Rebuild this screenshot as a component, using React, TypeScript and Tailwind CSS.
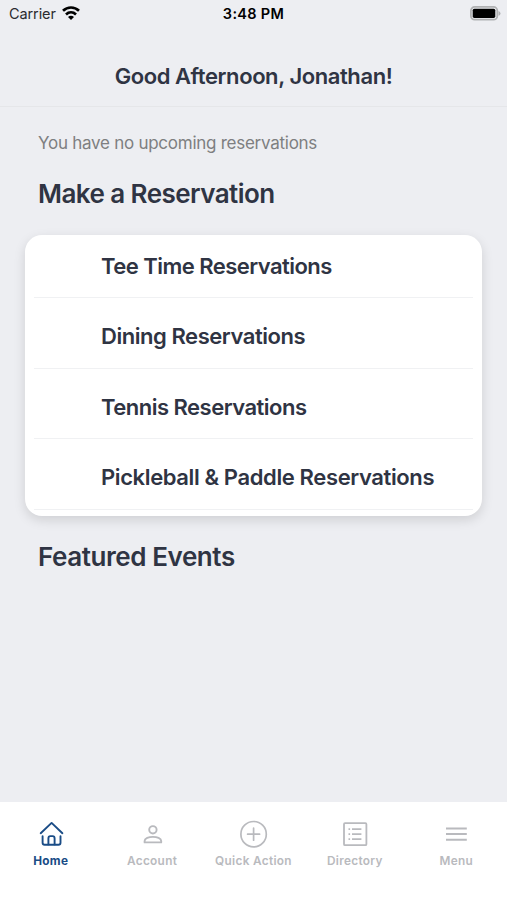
import { useState } from "react";
import type { ReactNode } from "react";

interface Tab {
  id: string;
  label: string;
  icon: ReactNode;
}

const RESERVATIONS = [
  { label: "Tee Time Reservations",            className: "h-[63px] tracking-[-0.54px]" },
  { label: "Dining Reservations",              className: "h-[71px] pt-1.5 tracking-[-0.45px]" },
  { label: "Tennis Reservations",              className: "h-[70px] pt-1.5 tracking-[-0.51px]" },
  { label: "Pickleball & Paddle Reservations", className: "h-[71px] pt-1.5 tracking-[-0.38px]" },
];

const TABS: Tab[] = [
  {
    id: "home",
    label: "Home",
    icon: (
      <>
        <path d="M4.7 14.2 15.6 3.9 26.4 14.2" />
        <path d="M6.6 17.3v6.4q0 2.1 2 2.1h13.9q2 0 2-2.1v-6.4" />
        <path d="M12.4 25.4v-6q0-2.3 2-2.3h2.2q2 0 2 2.3v6" />
      </>
    ),
  },
  {
    id: "account",
    label: "Account",
    icon: (
      <>
        <circle cx="15.9" cy="10.8" r="3.7" />
        <path d="M7.6 23.4v-1.5c0-2.6 4.2-4 8.3-4s8.3 1.4 8.3 4v1.5z" />
      </>
    ),
  },
  {
    id: "quick",
    label: "Quick Action",
    icon: (
      <>
        <circle cx="15.6" cy="15.2" r="12.7" strokeWidth="1.7" />
        <path d="M15.6 9.2v12M9.6 15.2h12" strokeWidth="1.7" />
      </>
    ),
  },
  {
    id: "directory",
    label: "Directory",
    icon: (
      <>
        <rect x="4" y="4.2" width="22.4" height="22" rx="1" strokeWidth="1.8" />
        <path d="M12 10.2H21.4M12 15.2H21.4M12 20.2H21.4M8.5 10.2h1.6M8.5 15.2h1.6M8.5 20.2h1.6" strokeLinecap="butt" strokeWidth="1.7" />
      </>
    ),
  },
  {
    id: "menu",
    label: "Menu",
    icon: <path d="M5 9.5h20.8M5 15h20.8M5 20.8h20.8" strokeLinecap="butt" strokeWidth="2.1" />,
  },
];

function StatusBar() {
  return (
    <div className="grid h-7 grid-cols-3 items-center pl-[9px] pr-[6px] text-black">
      <div className="flex items-center gap-1.5">
        <span className="text-[14.5px] leading-7 tracking-[-0.1px] text-[#2a2b2f]">Carrier</span>
        <svg className="-mt-0.5" width="18" height="14" viewBox="0 0 18 14" fill="none" stroke="currentColor" strokeWidth="2.7">
          <path d="M1 4.8C5.6.4 12.4.4 17 4.8" />
          <path d="M4 8.4c2.9-2.7 7.1-2.7 10 0" />
          <path d="M9 14 6 11c1.7-1.7 4.3-1.7 6 0z" fill="currentColor" stroke="none" />
        </svg>
      </div>
      <span className="-ml-[3px] text-center text-[14.5px] font-semibold leading-7 tracking-[0.3px]">3:48 PM</span>
      <svg className="-mt-0.5 justify-self-end" width="31" height="15" viewBox="0 0 31 15">
        <rect x=".9" y=".9" width="26.4" height="12.8" rx="3.8" fill="none" stroke="#b0b1b3" strokeWidth="1.8" />
        <rect x="2.7" y="2.7" width="22.6" height="9.2" rx="1.6" fill="#000" />
        <path d="M28.5 5v4.8q2-.7 2-2.4t-2-2.4z" fill="#b0b1b3" />
      </svg>
    </div>
  );
}

export default function App() {
  const [active, setActive] = useState("home");

  return (
    <div className="flex h-[900px] w-full flex-col bg-[#edeef2] font-['Inter',sans-serif] text-[#2f3443]">
      <StatusBar />

      {/* Greeting */}
      <header className="flex h-[79px] items-center justify-center border-b border-[#e5e6e9] pt-[17px]">
        <h1 className="text-[22px] font-[560] leading-7 tracking-[-0.42px]">Good Afternoon, Jonathan!</h1>
      </header>

      <main className="flex-1">
        <p className="pl-[38px] pt-6 text-[17px] leading-6 tracking-[-0.26px] text-[#7e7f81]">You have no upcoming reservations</p>
        <h2 className="pl-[38px] pt-[21px] text-[26px] font-[560] leading-9 tracking-[-0.56px]">Make a Reservation</h2>

        <div className="mx-[25px] mt-[23px] h-[281px] rounded-[17px] bg-white px-[9px] shadow-[0_4px_12px_rgba(0,0,0,0.13)]">
          {RESERVATIONS.map(({ label, className }) => (
            <button
              key={label}
              className={`flex w-full items-center border-b border-[#f0f1f3] pl-[67px] text-[22px] font-[560] leading-7 ${className}`}
            >
              {label}
            </button>
          ))}
        </div>

        <h2 className="pl-[38px] pt-[23px] text-[26px] font-[560] leading-9 tracking-[-0.42px]">Featured Events</h2>
      </main>

      {/* Tab bar */}
      <nav className="grid h-[98px] grid-cols-5 bg-white">
        {TABS.map(({ id, label, icon }) => (
          <button
            key={id}
            onClick={() => setActive(id)}
            className={`flex flex-col items-center pt-[17px] ${active === id ? "text-[#1a4c86]" : "text-[#b9babe]"}`}
          >
            <svg width="30" height="30" viewBox="0 0 30 30" fill="none" stroke="currentColor" strokeWidth="1.9" strokeLinecap="round" strokeLinejoin="round">
              {icon}
            </svg>
            <span className={`mt-1 whitespace-nowrap text-[11.8px] leading-4 tracking-[0.32px] ${active === id ? "font-bold" : "font-semibold"}`}>
              {label}
            </span>
          </button>
        ))}
      </nav>
    </div>
  );
}
